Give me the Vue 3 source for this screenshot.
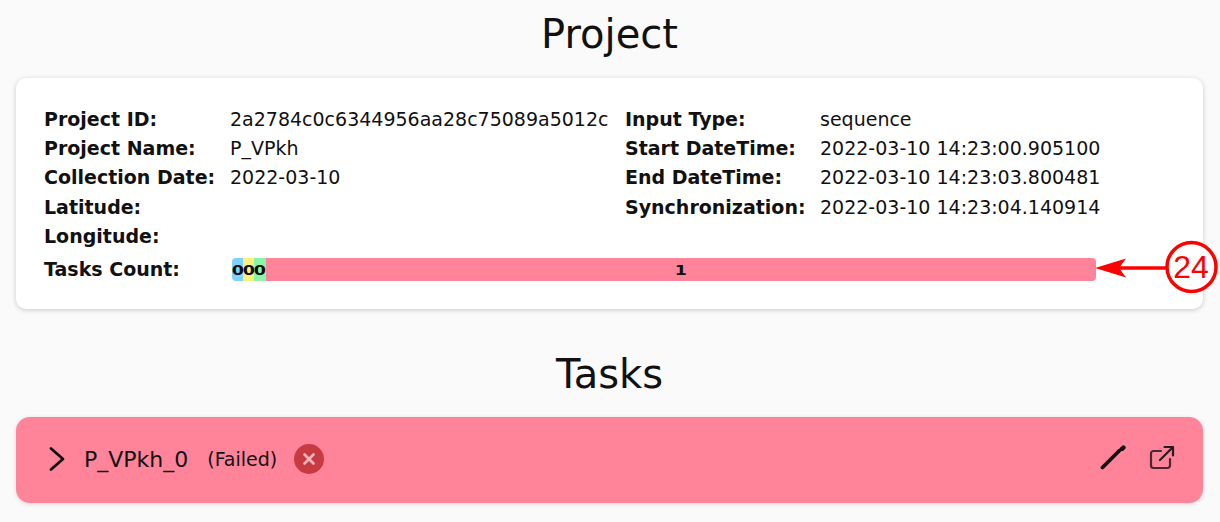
<template>
  <div class="page">
    <h1 class="title">Project</h1>
    <section class="card">
      <div class="info">
        <div class="col col-left">
          <div v-for="row in leftRows" :key="row.label" class="row">
            <span class="label">{{ row.label }}</span>
            <span>{{ row.value }}</span>
          </div>
        </div>
        <div class="col col-right">
          <div v-for="row in rightRows" :key="row.label" class="row">
            <span class="label">{{ row.label }}</span>
            <span>{{ row.value }}</span>
          </div>
        </div>
      </div>
      <div class="count-row">
        <span class="label">Tasks Count:</span>
        <div class="bar">
          <div v-for="seg in segments" :key="seg.color" class="seg" :style="{ background: seg.color, flex: seg.flex }">
            <span class="seg-count">{{ seg.count }}</span>
          </div>
        </div>
      </div>
      <svg class="callout" width="124" height="64" viewBox="0 0 124 64">
        <line x1="20" y1="32" x2="72" y2="32" stroke="#ff0000" stroke-width="3.500" />
        <path d="M1 32 L32 22.500 L25 32 L32 41.500 Z" fill="#ff0000" />
        <circle cx="97.500" cy="31" r="24.500" fill="#fff" stroke="#ff0000" stroke-width="3.500" />
        <text x="97" y="42" text-anchor="middle" class="callout-text">24</text>
      </svg>
    </section>

    <h1 class="title tasks-title">Tasks</h1>
    <section class="task">
      <svg class="chevron" width="18" height="26" viewBox="0 0 18 26">
        <path d="M4 2.500 L16 13 L4 23.500" fill="none" stroke="#111" stroke-width="2.800" stroke-linecap="round" stroke-linejoin="round" />
      </svg>
      <span class="task-name">P_VPkh_0</span>
      <span class="task-status">(Failed)</span>
      <span class="fail-icon">
        <svg width="14" height="14" viewBox="0 0 14 14">
          <path d="M2.500 2.500 L11.500 11.500 M11.500 2.500 L2.500 11.500" stroke="#f3b4bc" stroke-width="2.600" stroke-linecap="round" />
        </svg>
      </span>
      <div class="actions">
        <svg width="28" height="28" viewBox="0 0 28 28">
          <path d="M2.500 22.500 L19 6" stroke="#111" stroke-width="3.800" stroke-linecap="round" />
          <path d="M22 4 L23.500 2.500" stroke="#111" stroke-width="4.400" stroke-linecap="round" />
          <path d="M18 7 L22 3" stroke="#111" stroke-width="2.600" />
        </svg>
        <svg width="28" height="28" viewBox="0 0 28 28">
          <path d="M12 6 H4.500 A2.500 2.500 0 0 0 2 8.500 V20.500 A2.500 2.500 0 0 0 4.500 23 H18.500 A2.500 2.500 0 0 0 21 20.500 V14" fill="none" stroke="#4a2630" stroke-width="2.200" stroke-linecap="round" />
          <path d="M11 15 L24 2 M15.500 2 H24 V10.500" fill="none" stroke="#2a1a20" stroke-width="2.200" stroke-linecap="round" stroke-linejoin="round" />
        </svg>
      </div>
    </section>
  </div>
</template>

<script setup>
const leftRows = [
  { label: 'Project ID:', value: '2a2784c0c6344956aa28c75089a5012c' },
  { label: 'Project Name:', value: 'P_VPkh' },
  { label: 'Collection Date:', value: '2022-03-10' },
  { label: 'Latitude:', value: '' },
  { label: 'Longitude:', value: '' },
]

const rightRows = [
  { label: 'Input Type:', value: 'sequence' },
  { label: 'Start DateTime:', value: '2022-03-10 14:23:00.905100' },
  { label: 'End DateTime:', value: '2022-03-10 14:23:03.800481' },
  { label: 'Synchronization:', value: '2022-03-10 14:23:04.140914' },
]

const segments = [
  { color: '#7fd2ff', flex: '0 0 11px', count: 0 },
  { color: '#fdf07c', flex: '0 0 11px', count: 0 },
  { color: '#8af5a6', flex: '0 0 12px', count: 0 },
  { color: '#ff8399', flex: '1', count: 1 },
]
</script>

<style>
html, body {
  margin: 0;
  background: #fafafa;
}
</style>

<style scoped>
.page {
  font-family: "DejaVu Sans", sans-serif;
  color: #111;
  padding: 0 17px 0 16px;
  height: 522px;
  box-sizing: border-box;
  overflow: hidden;
}

.title {
  margin: 0;
  text-align: center;
  font-size: 40px;
  font-weight: 400;
  line-height: 46px;
  padding-top: 11px;
  height: 78px;
  box-sizing: border-box;
}

.tasks-title {
  margin-top: 30px;
  padding-top: 12px;
}

.card {
  position: relative;
  height: 231px;
  background: #fff;
  border-radius: 10px;
  box-shadow: 0 1px 5px rgba(0, 0, 0, 0.2);
  padding: 27px 28px 0;
  box-sizing: border-box;
  font-size: 19px;
}

.info {
  display: flex;
}

.col-left {
  width: 581px;
}

.row {
  display: flex;
  height: 29.200px;
  line-height: 29.200px;
}

.col-left .label {
  width: 186px;
}

.col-right .label {
  width: 195px;
}

.label {
  font-weight: 700;
  flex: none;
}

.count-row {
  display: flex;
  align-items: center;
  height: 23px;
  margin-top: 7px;
}

.count-row .label {
  width: 188px;
  padding-bottom: 1px;
}

.bar {
  width: 864px;
  height: 23px;
  display: flex;
  border-radius: 4px;
  overflow: hidden;
}

.seg {
  display: flex;
  align-items: center;
  justify-content: center;
  font-size: 14px;
  font-weight: 700;
  padding-top: 2px;
  box-sizing: border-box;
}

.seg-count {
  display: inline-block;
  transform: scaleX(1.250);
}

.callout {
  position: absolute;
  left: 1078px;
  top: 158px;
}

.callout-text {
  font-family: "Liberation Sans", sans-serif;
  font-size: 32px;
  fill: #ff0000;
}

.task {
  height: 86px;
  background: #ff8399;
  border-radius: 14px;
  box-shadow: 0 1px 4px rgba(0, 0, 0, 0.15);
  display: flex;
  align-items: center;
  padding: 0 26px 2px 31px;
  box-sizing: border-box;
}

.chevron {
  flex: none;
  margin-right: 19px;
}

.task-name {
  font-size: 22px;
  margin-right: 19px;
}

.task-status {
  font-size: 19px;
  margin-right: 17px;
}

.fail-icon {
  width: 30px;
  height: 30px;
  border-radius: 50%;
  background: #c73a42;
  display: flex;
  align-items: center;
  justify-content: center;
}

.actions {
  margin-left: auto;
  display: flex;
  gap: 21px;
  align-items: center;
}
</style>
